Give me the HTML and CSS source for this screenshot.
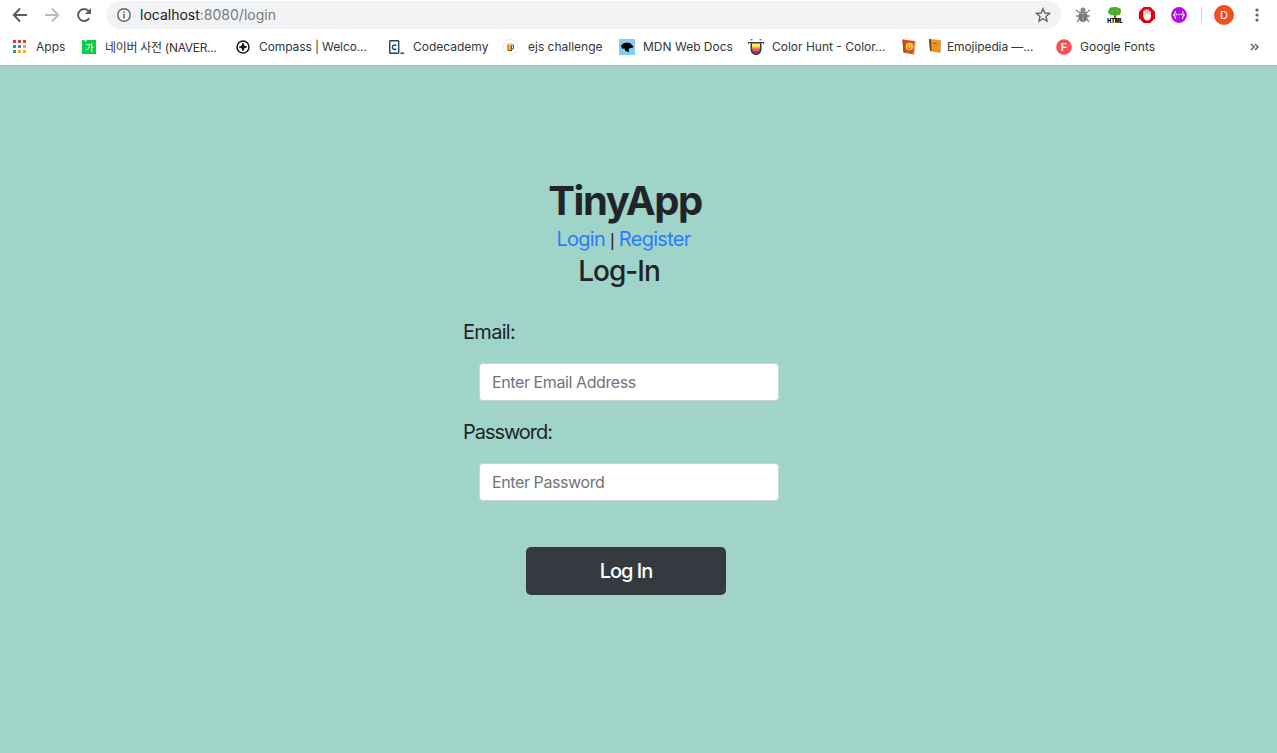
FILE: index.html
```html
<!DOCTYPE html>
<html lang="en">
<head>
<meta charset="utf-8">
<title>TinyApp</title>
<link rel="stylesheet" href="styles.css">
</head>
<body>
<header class="browser">
  <div class="toolbar">
    <svg class="nav" viewBox="0 0 16 16"><path d="M15 8H2M8 1.500 1.800 8 8 14.500" fill="none" stroke="#5a5d61" stroke-width="2"/></svg>
    <svg class="nav" viewBox="0 0 16 16"><path d="M1 8h13M8 1.500 14.200 8 8 14.500" fill="none" stroke="#bcbdbf" stroke-width="2"/></svg>
    <svg class="nav" viewBox="0 0 16 16"><path d="M13.200 11.200A6 6 0 1 1 12.700 4.200" fill="none" stroke="#5a5d61" stroke-width="2"/><path d="M15 1v6H9z" fill="#5a5d61"/></svg>
    <div class="address">
      <svg class="info" viewBox="0 0 14 14"><circle cx="7" cy="7" r="6.200" fill="none" stroke="#5f6368" stroke-width="1.400"/><path d="M7 6v4.500M7 3.500v1.500" stroke="#5f6368" stroke-width="1.500"/></svg>
      <span class="url">localhost<span class="path">:8080/login</span></span>
      <svg class="star" viewBox="0 0 16 16"><path d="m8 1.700 1.850 4.300 4.650.4-3.500 3.100 1.050 4.600L8 11.700l-4.050 2.400L5 9.500 1.500 6.400 6.150 6z" fill="none" stroke="#5f6368" stroke-width="1.400"/></svg>
    </div>
    <div class="extensions">
      <svg class="ext" viewBox="0 0 16 16"><path d="m1 3 4 3M15 3l-4 3M1 9h14M2 15l3-4M14 15l-3-4" stroke="#888" stroke-width="1.300"/><ellipse cx="8" cy="9.500" rx="4.500" ry="5.800" fill="#777"/><circle cx="8" cy="3" r="2.600" fill="#8b8b8b"/><path d="M4 6.500h8M8 7v8" stroke="#aaa" stroke-width=".8"/></svg>
      <svg class="ext" viewBox="0 0 16 16"><path d="M7 6h2.200v5H7z" fill="#95551f"/><path d="M5 11h6l1 1H4z" fill="#6cae3b"/><path d="M3 7.500a3 3 0 0 1-1-5C2.500.5 4.500 0 5.500.5 7-.5 10-.4 11 .8c2 0 3.800 2 2.800 3.700C14.200 7.500 12 8.700 10 8 8.500 9.300 6.500 9 5.800 8 4.500 8.700 3.500 8.200 3 7.500z" fill="#4eac2b"/><path d="M4 5c1 1 2 .5 2-.5M9 3c1 0 2 1 1 2" fill="none" stroke="#82cf4e" stroke-width=".8"/><text x="8" y="16" class="html-label" textLength="15.500" lengthAdjust="spacingAndGlyphs">HTML</text></svg>
      <svg class="ext" viewBox="0 0 16 16"><path d="M4.700 0h6.600L16 4.700v6.600L11.300 16H4.700L0 11.300V4.700z" fill="#e1000f"/><path d="M5.200 4v5M7.100 3v6M9 3v6M10.900 4.500V10" stroke="#fff" stroke-width="1.500" stroke-linecap="round"/><path d="M4.500 7.500h7.200V10c0 2-1.400 3.500-3.400 3.500-2.300 0-3.800-2-3.800-4z" fill="#fff"/></svg>
      <svg class="ext" viewBox="0 0 16 16"><circle cx="8" cy="8" r="7.900" fill="#b20ce8"/><path d="M5 4.500c-1.500 0-.8 2.400-1.300 3l-1 .5 1 .5c.5.600-.2 3 1.300 3M11 4.500c1.500 0 .8 2.400 1.300 3l1 .5-1 .5c-.5.600.2 3-1.300 3" fill="none" stroke="#fff" stroke-width="1.100"/><path d="M5 7.500h1.300M7.400 7.500h1.300M9.800 7.500h1.300" stroke="#fff" stroke-width="1.500"/></svg>
    </div>
    <span class="divider"></span>
    <span class="avatar">D</span>
    <svg class="more" viewBox="0 0 4 14"><g fill="#5f6368"><circle cx="2" cy="2" r="1.600"/><circle cx="2" cy="7" r="1.600"/><circle cx="2" cy="12" r="1.600"/></g></svg>
  </div>
  <nav class="bookmarks">
    <span class="bookmark apps"><svg class="favicon" viewBox="0 0 16 16"><path d="M1 1h3v3H1zM6 1h3v3H6zM11 1h3v3h-3z" fill="#ea3535"/><path d="M1 6h3v3H1zM1 11h3v3H1z" fill="#2c9d5b"/><path d="M6 6h3v3H6z" fill="#3a82ee"/><path d="M11 6h3v3h-3zM6 11h3v3H6zM11 11h3v3h-3z" fill="#f5ad20"/></svg><span class="name">Apps</span></span>
    <span class="bookmark naver"><svg class="favicon" viewBox="0 0 16 16"><path d="M1 1h14v14H1z" fill="#05ce47"/><path d="M3 1h1l.6 1.500L5.500 1" fill="none" stroke="#fff" stroke-width=".8"/><text x="8.500" y="12" class="ko-label">가</text></svg><span class="name">네이버 사전 (NAVER...</span></span>
    <span class="bookmark compass"><svg class="favicon" viewBox="0 0 16 16"><circle cx="7" cy="8" r="6" fill="none" stroke="#18191d" stroke-width="1.500"/><path d="M7 4v8M3 8h8" stroke="#18191d" stroke-width="1.200"/><path d="M7 4.200 8.500 6.500 10.800 8 8.500 9.500 7 11.800 5.500 9.500 3.200 8l2.300-1.500z" fill="#18191d"/></svg><span class="name">Compass | Welco...</span></span>
    <span class="bookmark code"><svg class="favicon" viewBox="0 0 16 16"><rect x="1.700" y="1.700" width="9" height="12.500" rx=".6" fill="none" stroke="#24435a" stroke-width="1.400"/><path d="M8.300 6.700C6.500 5.300 4.400 6.200 4.400 8.200s2.100 3 3.900 1.700M12.500 14.200H16" fill="none" stroke="#24435a" stroke-width="1.400"/></svg><span class="name">Codecademy</span></span>
    <span class="bookmark ejs"><svg class="favicon" viewBox="0 0 16 16"><circle cx="7.500" cy="8" r="7.400" fill="#fff" stroke="#e4e4e4" stroke-width=".8"/><path d="M8.500 6h2v4h-2" fill="none" stroke="#65553a"/><path d="M4.500 4.500h4.500v7.500H4.500z" fill="#7a5514"/><path d="M5.300 6h2.700v5H5.300z" fill="#f3b21d"/><path d="M4.500 4h4.500v2H4.500z" fill="#e2d7b6"/></svg><span class="name">ejs challenge</span></span>
    <span class="bookmark mdn"><svg class="favicon" viewBox="0 0 16 16"><path d="M0 0h16v16H0z" fill="#83d0f2"/><path d="M2 6.500 5 4l3-.6L11 4l2 2 1.500 1.500-1 1.200-3 .5L9.500 11l.7 2.500L6 11.500l-.5-2L3 9.800z"/></svg><span class="name">MDN Web Docs</span></span>
    <span class="bookmark hunt"><svg class="favicon" viewBox="0 0 16 16"><path d="M2.500 3h11v7c0 3.800-2.300 6-5.500 6s-5.500-2.200-5.500-6z" fill="#393c56"/><path d="M4 4.500h8V8H4z" fill="#fff34d"/><path d="M4 7.500h8v2.300H4z" fill="#ffb63c"/><path d="M4 9.800h8L11 12.500H5z" fill="#f95366"/><path d="M4.800 12.300h6.400C10.500 13.800 9.500 14.700 8 14.700s-2.500-.9-3.200-2.400z" fill="#a13470"/><path d="M.5 5V3.500h15V5" fill="none" stroke="#393c56" stroke-width="1.200"/><path d="M2.500.8h2M11.500.8h2" stroke="#393c56"/></svg><span class="name">Color Hunt - Color...</span></span>
    <span class="bookmark book"><svg class="favicon" viewBox="0 0 16 16"><path d="m1.500.5 12.500 1.500-1.500 13.500L2.500 13.500z" fill="#d95619"/><path d="m14 2 1 .5-1.500 13-1 .5z" fill="#d4b49d"/><path d="m1.500.5 1 13L4 14 3.300.8z" fill="#b84312"/><circle cx="8.500" cy="7.500" r="3.800" fill="#ffc43c"/><path d="M6.500 8.300c.8 1.800 2.800 1.800 3.500 0M7 6.300h.8M9.200 6.300h.8" fill="none" stroke="#9c4b0d" stroke-width=".8"/></svg></span>
    <span class="bookmark emoji"><svg class="favicon" viewBox="0 0 16 16"><path d="M1 0 12 1v13L2 12z" fill="#ed971e"/><path d="M1 0 3 .2 3.500 12.300 2 12z" fill="#704013"/><path d="m12 1 1 .5v11.500l-1 1z" fill="#cfae83"/><path d="m5 4 4 .6" stroke="#9e570d"/></svg><span class="name">Emojipedia —...</span></span>
    <span class="bookmark fonts"><svg class="favicon" viewBox="0 0 16 16"><circle cx="8" cy="8" r="7.800" fill="#f94f56"/><text x="8" y="12" class="f-label">F</text></svg><span class="name">Google Fonts</span></span>
    <svg class="overflow" viewBox="0 0 10 8"><path d="m1 1 3 3-3 3M5 1l3 3-3 3" fill="none" stroke="#5f6368" stroke-width="1.500"/></svg>
  </nav>
</header>
<main class="page">
  <h1 class="title">TinyApp</h1>
  <div class="links"><a class="link" href="#">Login</a> <span class="bar">|</span> <a class="link" href="#">Register</a></div>
  <h3 class="subtitle">Log-In</h3>
  <form class="form">
    <label class="label" for="email">Email:</label>
    <input class="input" id="email" type="email" placeholder="Enter Email Address">
    <label class="label second" for="password">Password:</label>
    <input class="input" id="password" type="password" placeholder="Enter Password">
    <button class="submit" type="button">Log In</button>
  </form>
</main>
</body>
</html>
```
FILE: styles.css
```css
* { box-sizing: border-box; }
body {
  margin: 0;
  height: 753px;
  overflow: hidden;
  display: flex;
  flex-direction: column;
  background: #a0d4c8;
  color: #212529;
  font-family: Inter, "Noto Sans CJK KR", sans-serif;
}
.browser { height: 66px; flex: none; background: #fff; border-bottom: 1px solid #b0b6b4; }
.toolbar { height: 30px; display: flex; align-items: center; padding-left: 12px; }
.nav { width: 16px; height: 16px; margin-right: 16px; flex: none; }
.address {
  width: 955px; height: 28px; margin-left: -2px; padding: 0 10px 0 11px;
  border-radius: 14px; background: #f1f3f4; display: flex; align-items: center; flex: none;
}
.info { width: 14px; height: 14px; margin-right: 9px; }
.url { font-size: 14px; color: #202124; letter-spacing: 0; padding-bottom: 2px; }
.path { color: #777b80; }
.star { width: 16px; height: 16px; margin-left: auto; }
.extensions { display: flex; gap: 16px; margin-left: 14px; }
.ext { width: 16px; height: 16px; }
.html-label { font-family: Inter, sans-serif; font-size: 5.500px; font-weight: 900; text-anchor: middle; }
.divider { width: 1px; height: 16px; margin: 0 12px 0 14px; background: #cfd1d3; }
.avatar {
  width: 20px; height: 20px; border-radius: 50%; background: #f24e1e; color: #fff;
  font-size: 11px; display: flex; align-items: center; justify-content: center;
}
.more { width: 4px; height: 14px; margin-left: 21px; }
.bookmarks {
  height: 34px; padding-left: 12px; display: grid; align-items: center;
  grid-template-columns: 69px 155px 152px 116px 115px 129px 153px 27px 128px 194px 12px;
  font-size: 12px; color: #33363a;
}
.bookmark { display: flex; align-items: center; gap: 8px; white-space: nowrap; }
.name { padding-bottom: 2px; }
.favicon { width: 16px; height: 16px; flex: none; }
.naver .name { letter-spacing: -0.3px; }
.compass { gap: 7px; }
.compass .name { letter-spacing: -0.1px; }
.code { gap: 9px; }
.ejs .favicon { margin-left: -1px; }
.ejs { gap: 9px; }
.emoji { gap: 3px; }
.emoji .name { letter-spacing: -0.1px; }
.ko-label { font-family: "Noto Sans CJK KR", sans-serif; font-size: 9px; fill: #fff; text-anchor: middle; }
.f-label { font-family: Inter, sans-serif; font-size: 11px; font-weight: 600; fill: #fff; text-anchor: middle; }
.overflow { width: 10px; height: 8px; }
.page { flex: 1; padding-top: 111px; display: flex; flex-direction: column; align-items: center; }
.title { margin: 0 0 -1px; padding-right: 27px; font-size: 40px; line-height: 48px; font-weight: 700; letter-spacing: -1.4px; }
.links { padding-right: 30px; font-size: 20px; line-height: 30px; letter-spacing: -0.72px; }
.link { color: #2a7bff; text-decoration: none; }
.bar { font-family: "Liberation Sans", sans-serif; font-size: 18px; line-height: 1; }
.subtitle { margin: 0; padding-right: 39px; font-size: 28px; line-height: 34px; font-weight: 500; letter-spacing: -1px; }
.form { width: 351px; margin-top: 29px; display: flex; flex-direction: column; align-items: flex-start; }
.label { font-size: 20px; line-height: 30px; letter-spacing: -0.7px; }
.second { margin-top: 16px; letter-spacing: -1.05px; }
.input {
  width: 300px; height: 38px; margin: 16px 0 0 16px; padding: 6px 12px;
  border: 1px solid #ced4da; border-radius: 4px; background: #fff;
  font-family: inherit; font-size: 16px; letter-spacing: -0.4px;
}
.input::placeholder { color: #6c757d; opacity: 1; }
.submit {
  width: 200px; height: 48px; margin: 46px 0 0 63px; padding: 0; border: 0; border-radius: 5px;
  background: #343a40; color: #fff; font-family: inherit; font-size: 20px; font-weight: 500; letter-spacing: -1px;
}
```
